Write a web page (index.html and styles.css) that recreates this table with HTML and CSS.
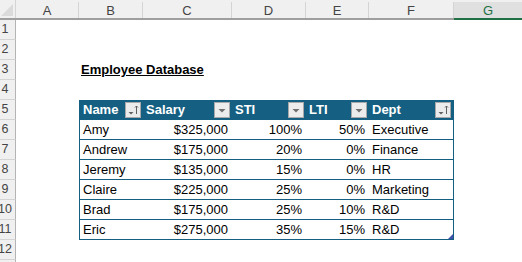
FILE: index.html
```html
<!DOCTYPE html>
<html lang="en">
<head>
  <meta charset="UTF-8">
  <title>Employee Database</title>
  <link rel="stylesheet" href="styles.css">
</head>
<body>
  <div class="sheet">
    <div class="colhead">
      <div class="corner"></div>
      <div class="col">A</div>
      <div class="col">B</div>
      <div class="col">C</div>
      <div class="col">D</div>
      <div class="col">E</div>
      <div class="col">F</div>
      <div class="col selected">G</div>
    </div>

    <div class="row"><div class="rh"><span>1</span></div></div>
    <div class="row"><div class="rh"><span>2</span></div></div>
    <div class="row">
      <div class="rh"><span>3</span></div>
      <div class="cell"></div>
      <div class="cell title">Employee Database</div>
    </div>
    <div class="row"><div class="rh"><span>4</span></div></div>

    <div class="row">
      <div class="rh"><span>5</span></div>
      <div class="cell"></div>
      <div class="cell th first">Name <span class="filter sort"></span></div>
      <div class="cell th">Salary <span class="filter"></span></div>
      <div class="cell th">STI <span class="filter"></span></div>
      <div class="cell th">LTI <span class="filter"></span></div>
      <div class="cell th last">Dept <span class="filter sort"></span></div>
    </div>

    <div class="row">
      <div class="rh"><span>6</span></div>
      <div class="cell"></div>
      <div class="cell td first">Amy</div>
      <div class="cell td num">$325,000</div>
      <div class="cell td num">100%</div>
      <div class="cell td num">50%</div>
      <div class="cell td last">Executive</div>
    </div>
    <div class="row">
      <div class="rh"><span>7</span></div>
      <div class="cell"></div>
      <div class="cell td first">Andrew</div>
      <div class="cell td num">$175,000</div>
      <div class="cell td num">20%</div>
      <div class="cell td num">0%</div>
      <div class="cell td last">Finance</div>
    </div>
    <div class="row">
      <div class="rh"><span>8</span></div>
      <div class="cell"></div>
      <div class="cell td first">Jeremy</div>
      <div class="cell td num">$135,000</div>
      <div class="cell td num">15%</div>
      <div class="cell td num">0%</div>
      <div class="cell td last">HR</div>
    </div>
    <div class="row">
      <div class="rh"><span>9</span></div>
      <div class="cell"></div>
      <div class="cell td first">Claire</div>
      <div class="cell td num">$225,000</div>
      <div class="cell td num">25%</div>
      <div class="cell td num">0%</div>
      <div class="cell td last">Marketing</div>
    </div>
    <div class="row">
      <div class="rh"><span>10</span></div>
      <div class="cell"></div>
      <div class="cell td first">Brad</div>
      <div class="cell td num">$175,000</div>
      <div class="cell td num">25%</div>
      <div class="cell td num">10%</div>
      <div class="cell td last">R&amp;D</div>
    </div>
    <div class="row">
      <div class="rh"><span>11</span></div>
      <div class="cell"></div>
      <div class="cell td first">Eric</div>
      <div class="cell td num">$275,000</div>
      <div class="cell td num">35%</div>
      <div class="cell td num">15%</div>
      <div class="cell td last end">R&amp;D</div>
    </div>

    <div class="row"><div class="rh"><span>12</span></div></div>
    <div class="row"><div class="rh"></div></div>
  </div>
</body>
</html>
```

FILE: styles.css
```css
:root {
  --table-color: #156082;
  --head-bg: #f0f0f0;
  --grid-line: #d4d4d4;
  --cols: 16px 63px 64px 89px 74px 63px 85px 1fr;
}

body {
  margin: 0;
  background: #fff;
  font-family: 'Liberation Sans', Arial, sans-serif;
  font-size: 13px;
  color: #000;
  overflow: hidden;
}

.sheet {
  width: 522px;
  height: 262px;
  overflow: hidden;
}

.colhead {
  display: grid;
  grid-template-columns: var(--cols);
  height: 20px;
  background: var(--head-bg);
  border-bottom: 2px solid #9f9f9f;
  box-sizing: border-box;
}

.corner {
  position: relative;
  border-right: 1px solid var(--grid-line);
}

.corner::after {
  content: '';
  position: absolute;
  right: 2px;
  bottom: 2px;
  border-style: solid;
  border-width: 0 0 12px 12px;
  border-color: transparent transparent #dadada transparent;
}

.col {
  display: flex;
  align-items: center;
  justify-content: center;
  color: #444;
  border-right: 1px solid var(--grid-line);
  margin: 2px 0 0;
}

.col.selected {
  background: #e0e0e0;
  border-bottom: 2px solid #1e7145;
  margin-bottom: -2px;
  color: #1e7145;
  border-right: none;
}

.row {
  display: grid;
  grid-template-columns: var(--cols);
  height: 20px;
}

.rh {
  background: var(--head-bg);
  border-right: 1px solid #b4b4b4;
  border-bottom: 1px solid var(--grid-line);
  box-sizing: border-box;
  overflow: hidden;
  color: #444;
  line-height: 19px;
}

/* the row header is cut by the window edge, numbers sit left of centre */
.rh span {
  display: block;
  width: 20px;
  margin-left: -5px;
  text-align: center;
  font-size: 12.5px;
}

.cell {
  line-height: 20px;
  white-space: nowrap;
  padding: 0 3px;
  box-sizing: border-box;
}

.title {
  font-weight: bold;
  text-decoration: underline;
  padding-left: 2px;
}

.th {
  display: flex;
  align-items: center;
  justify-content: space-between;
  background: var(--table-color);
  color: #fff;
  font-weight: bold;
  padding: 0 2px 0 3px;
}

.td {
  border-bottom: 1px solid var(--table-color);
  line-height: 19px;
}

.first {
  border-left: 1px solid var(--table-color);
  padding-left: 3px;
}

.last {
  border-right: 1px solid var(--table-color);
}

.num {
  text-align: right;
  padding-right: 4px;
}

.filter {
  width: 16px;
  height: 16px;
  box-sizing: border-box;
  border: 1px solid #a8a8a8;
  background: #ececec url("data:image/svg+xml,%3Csvg xmlns='http://www.w3.org/2000/svg' width='14' height='14'%3E%3Cpath d='M3.5 6h7L7 9.5z' fill='%23707070'/%3E%3C/svg%3E") no-repeat center;
}

.filter.sort {
  background-image: url("data:image/svg+xml,%3Csvg xmlns='http://www.w3.org/2000/svg' width='14' height='14'%3E%3Cpath d='M2.5 9h5L5 11.5z' fill='%23606060'/%3E%3Cpath d='M10.5 3v8M9 4.5l1.5-1.5 1.5 1.5' stroke='%23606060' fill='none'/%3E%3C/svg%3E");
}

.end {
  position: relative;
}

.end::after {
  content: '';
  position: absolute;
  right: 0;
  bottom: 0;
  border-style: solid;
  border-width: 0 0 5px 5px;
  border-color: transparent transparent #3f51a8 transparent;
}
```
